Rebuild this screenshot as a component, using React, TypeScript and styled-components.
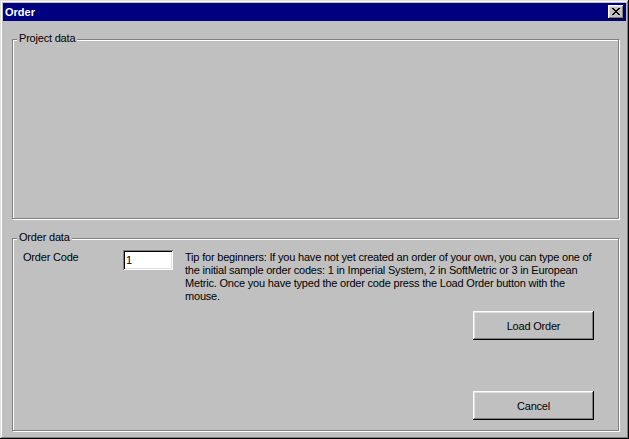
import React from "react";
import styled, { createGlobalStyle } from "styled-components";

const Global = createGlobalStyle`
  html, body { margin: 0; padding: 0; background: #c0c0c0; }
  body {
    font-family: "Liberation Sans", Arial, sans-serif;
    font-size: 11px;
    letter-spacing: -0.2px;
  }
  * { box-sizing: border-box; }
`;

const Frame = styled.div`
  width: 629px;
  height: 439px;
  background: #c0c0c0;
  padding: 3px;
  display: flex;
  flex-direction: column;
  box-shadow: inset -1px -1px #000, inset 1px 1px #dfdfdf, inset -2px -2px #808080, inset 2px 2px #fff;
`;

const TitleBar = styled.div`
  height: 18px;
  background: #000080;
  display: flex;
  align-items: center;
  justify-content: space-between;
  padding: 0 2px 0 2px;
`;

const Title = styled.span`
  color: #fff;
  font-family: "Liberation Sans", Arial, sans-serif;
  font-weight: bold;
  font-size: 11px;
  line-height: 13px;
  letter-spacing: 0;
`;

const CloseButton = styled.div`
  width: 16px;
  height: 14px;
  background: #c0c0c0;
  display: flex;
  align-items: center;
  justify-content: center;
  box-shadow: inset -1px -1px #000, inset 1px 1px #fff, inset -2px -2px #808080, inset 2px 2px #dfdfdf;
  svg { display: block; margin: 0 1px 1px 0; }
`;

const Content = styled.div`
  flex: 1;
  display: flex;
  flex-direction: column;
  padding: 18px 7px 5px 9px;
  gap: 19px;
`;

const Group = styled.div<{ $h: number }>`
  position: relative;
  flex-shrink: 0;
  height: ${(p) => p.$h}px;
  border: 1px solid #808080;
  box-shadow: inset 1px 1px #fff, 1px 1px #fff;
  display: flex;
  flex-direction: column;
`;

const GroupLabel = styled.span`
  position: absolute;
  left: 4px;
  top: -8px;
  padding: 0 2px 0 2px;
  background: #c0c0c0;
  color: #000;
  line-height: 13px;
  white-space: nowrap;
`;

const OrderBody = styled.div`
  display: flex;
  flex-direction: column;
  padding: 11px 24px 0 10px;
`;

const Row = styled.div`
  display: flex;
  align-items: flex-start;
`;

const FieldLabel = styled.span`
  flex: 0 0 100px;
  line-height: 13px;
  padding-top: 1px;
  color: #000;
`;

const CodeInput = styled.input`
  flex: 0 0 50px;
  width: 50px;
  height: 20px;
  margin: 0 12px 0 0;
  padding: 0 0 0 3px;
  border: none;
  outline: none;
  background: #fff;
  font-family: "Liberation Sans", Arial, sans-serif;
  font-size: 11px;
  color: #000;
  box-shadow: inset 1px 1px #808080, inset -1px -1px #fff, inset 2px 2px #000, inset -2px -2px #dfdfdf;
`;

const Tip = styled.div`
  flex: 1 1 auto;
  min-width: 0;
  line-height: 13px;
  padding-top: 1px;
  color: #000;
  span { display: block; white-space: nowrap; }
`;

const ButtonColumn = styled.div`
  display: flex;
  flex-direction: column;
  align-items: flex-end;
  gap: 51px;
  margin-top: 8px;
`;

const Button = styled.button`
  width: 121px;
  height: 29px;
  background: #c0c0c0;
  border: none;
  padding: 0;
  font-family: "Liberation Sans", Arial, sans-serif;
  font-size: 11px;
  letter-spacing: -0.2px;
  color: #000;
  box-shadow: inset -1px -1px #000, inset 1px 1px #fff, inset -2px -2px #808080, inset 2px 2px #dfdfdf;
`;

const CloseGlyph = () => (
  <svg width="8" height="7" viewBox="0 0 8 7" shapeRendering="crispEdges">
    <path
      fill="#000"
      d="M0 0h2v1H0zM6 0h2v1H6zM1 1h2v1H1zM5 1h2v1H5zM2 2h4v1H2zM3 3h2v1H3zM2 4h4v1H2zM1 5h2v1H1zM5 5h2v1H5zM0 6h2v1H0zM6 6h2v1H6z"
    />
  </svg>
);

export default function App() {
  return (
    <>
      <Global />
      <Frame>
        <TitleBar>
          <Title>Order</Title>
          <CloseButton>
            <CloseGlyph />
          </CloseButton>
        </TitleBar>
        <Content>
          <Group $h={180}>
            <GroupLabel>Project data</GroupLabel>
          </Group>
          <Group $h={193}>
            <GroupLabel>Order data</GroupLabel>
            <OrderBody>
              <Row>
                <FieldLabel>Order Code</FieldLabel>
                <CodeInput defaultValue="1" readOnly />
                <Tip>
                  <span>Tip for beginners: If you have not yet created an order of your own, you can type one of</span>
                  <span>the initial sample order codes: 1 in Imperial System, 2 in SoftMetric or 3 in European</span>
                  <span>Metric. Once you have typed the order code press the Load Order button with the</span>
                  <span>mouse.</span>
                </Tip>
              </Row>
              <ButtonColumn>
                <Button>Load Order</Button>
                <Button>Cancel</Button>
              </ButtonColumn>
            </OrderBody>
          </Group>
        </Content>
      </Frame>
    </>
  );
}
